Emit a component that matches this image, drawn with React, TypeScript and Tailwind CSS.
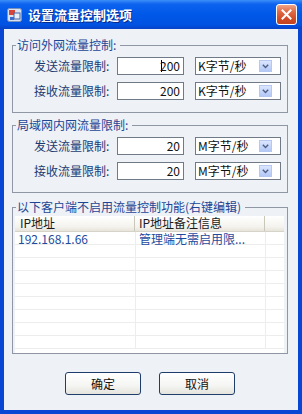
import type { ReactNode } from 'react'

const font = "font-['Noto_Sans_CJK_SC','Liberation_Sans',sans-serif]"

function TitleIcon() {
  return (
    <svg width="15" height="14" viewBox="0 0 15 14" className="shrink-0">
      <rect x="0.5" y="0.5" width="14" height="13" rx="2" fill="#d8e2f2" stroke="#7f93b8" />
      <rect x="2" y="2" width="6" height="5" fill="#d6453a" />
      <rect x="7" y="5" width="6" height="6" fill="#e8eef8" stroke="#4766a8" strokeWidth="1" />
      <path d="M3 9h4v3H3z" fill="#3e6ccd" />
    </svg>
  )
}

function CloseButton() {
  return (
    <div className="flex h-[21px] w-[21px] items-center justify-center rounded-[3px] border border-white bg-[linear-gradient(180deg,#f0a487_0%,#e06a45_35%,#cf4a25_75%,#c24420_100%)]">
      <svg width="11" height="11" viewBox="0 0 11 11">
        <path d="M1.5 1.5l8 8M9.5 1.5l-8 8" stroke="white" strokeWidth="2" strokeLinecap="square" />
      </svg>
    </div>
  )
}

function GroupBox({ title, className, children }: { title: string; className?: string; children: ReactNode }) {
  return (
    <fieldset className={`border border-[#8e97a3] ${className ?? ''}`}>
      <legend className="ml-[3px] pl-[1px] pr-[4px] text-[12px] leading-[14px] text-[#1d4595]">{title}</legend>
      {children}
    </fieldset>
  )
}

function UnitSelect({ unit }: { unit: string }) {
  return (
    <div className="ml-[11px] flex h-[18px] w-[86px] items-center border border-[#6f7a86] bg-white pl-[2px]">
      <span className="flex-1 text-[12px] leading-[14px] text-[#111]">{unit}</span>
      <div className="mr-[8px] flex h-[12px] w-[13px] items-center justify-center border border-[#b5c8f2] bg-[linear-gradient(180deg,#dbe6fe_0%,#c3d4fa_60%,#b3c8f6_100%)]">
        <svg width="7" height="5" viewBox="0 0 7 5">
          <path d="M0.8 0.8L3.5 3.6L6.2 0.8" fill="none" stroke="#4c5f86" strokeWidth="1.4" />
        </svg>
      </div>
    </div>
  )
}

function LimitRow({ label, value, unit, caret }: { label: string; value: string; unit: string; caret?: boolean }) {
  return (
    <div className="flex h-[18px] items-center">
      <span className="w-[83px] text-[12px] leading-[14px] text-[#1c3a72]">{label}</span>
      <div className="flex h-[18px] w-[67px] items-center justify-end border border-[#6f7a86] bg-white pr-[3px] text-[12px] leading-[14px] text-[#111]">
        {caret && <span className="mr-[-2px] h-[12px] w-[1px] bg-black" />}
        {value}
      </div>
      <UnitSelect unit={unit} />
    </div>
  )
}

const rows = Array.from({ length: 9 })

export default function App() {
  return (
    <div className={`flex h-[414px] w-[302px] flex-col ${font}`}>
      <div className="flex h-[29px] items-center bg-[linear-gradient(180deg,#3d8ff9_0%,#0d63ef_14%,#0058e8_50%,#0052e2_85%,#0843c6_100%)] pl-[7px] pr-[5px]">
        <TitleIcon />
        <span className="ml-[6px] flex-1 text-[13px] font-bold leading-[16px] text-white [text-shadow:1px_1px_0_#0a2a8a]">
          设置流量控制选项
        </span>
        <CloseButton />
      </div>

      <div className="flex flex-1 flex-col border-x-4 border-b-4 border-[#0a46d4] bg-[#eef1f6] pl-[8px] pr-[10px]">
        <GroupBox title="访问外网流量控制:" className="mt-[9px] pb-[12px] pt-[5px]">
          <div className="flex flex-col gap-[7px] pl-[21px]">
            <LimitRow label="发送流量限制:" value="200" unit="K字节/秒" caret />
            <LimitRow label="接收流量限制:" value="200" unit="K字节/秒" />
          </div>
        </GroupBox>

        <GroupBox title="局域网内网流量限制:" className="mt-[5px] pb-[12px] pt-[5px]">
          <div className="flex flex-col gap-[7px] pl-[21px]">
            <LimitRow label="发送流量限制:" value="20" unit="M字节/秒" />
            <LimitRow label="接收流量限制:" value="20" unit="M字节/秒" />
          </div>
        </GroupBox>

        <GroupBox title="以下客户端不启用流量控制功能(右键编辑)" className="mt-[7px] pt-[2px]">
          <div className="ml-[2px] mr-[3px] flex h-[137px] flex-col bg-white">
            <div className="flex h-[16px] shrink-0 border-b border-[#d6d3c8] bg-[linear-gradient(180deg,#ffffff_0%,#f4f3ee_70%,#e6e4da_100%)] text-[12px] leading-[14px] text-[#1a1a1a]">
              <div className="w-[120px] border-r border-[#c9c7ba] pl-[5px]">IP地址</div>
              <div className="w-[130px] border-r border-[#c9c7ba] pl-[4px]">IP地址备注信息</div>
              <div className="flex-1" />
            </div>
            {rows.map((_, i) => (
              <div key={i} className="flex h-[13px] shrink-0 border-b border-[#ededed] text-[12px] leading-[12px] text-[#1d4b9e]">
                <div className="w-[121px] border-r border-[#ededed] pl-[3px] pt-[1px]">{i === 0 ? '192.168.1.66' : ''}</div>
                <div className="w-[130px] border-r border-[#ededed] pl-[3px] pt-[1px]">{i === 0 ? '管理端无需启用限...' : ''}</div>
                <div className="flex-1" />
              </div>
            ))}
          </div>
        </GroupBox>

        <div className="mt-[18px] flex justify-center gap-[18px]">
          {['确定', '取消'].map((t) => (
            <button
              key={t}
              type="button"
              className="h-[23px] w-[76px] rounded-[3px] border border-[#1f3d6b] bg-[linear-gradient(180deg,#ffffff_0%,#f5f5f3_60%,#e4e3dc_100%)] text-[12px] leading-[14px] text-[#111]"
            >
              {t}
            </button>
          ))}
        </div>
      </div>
    </div>
  )
}
